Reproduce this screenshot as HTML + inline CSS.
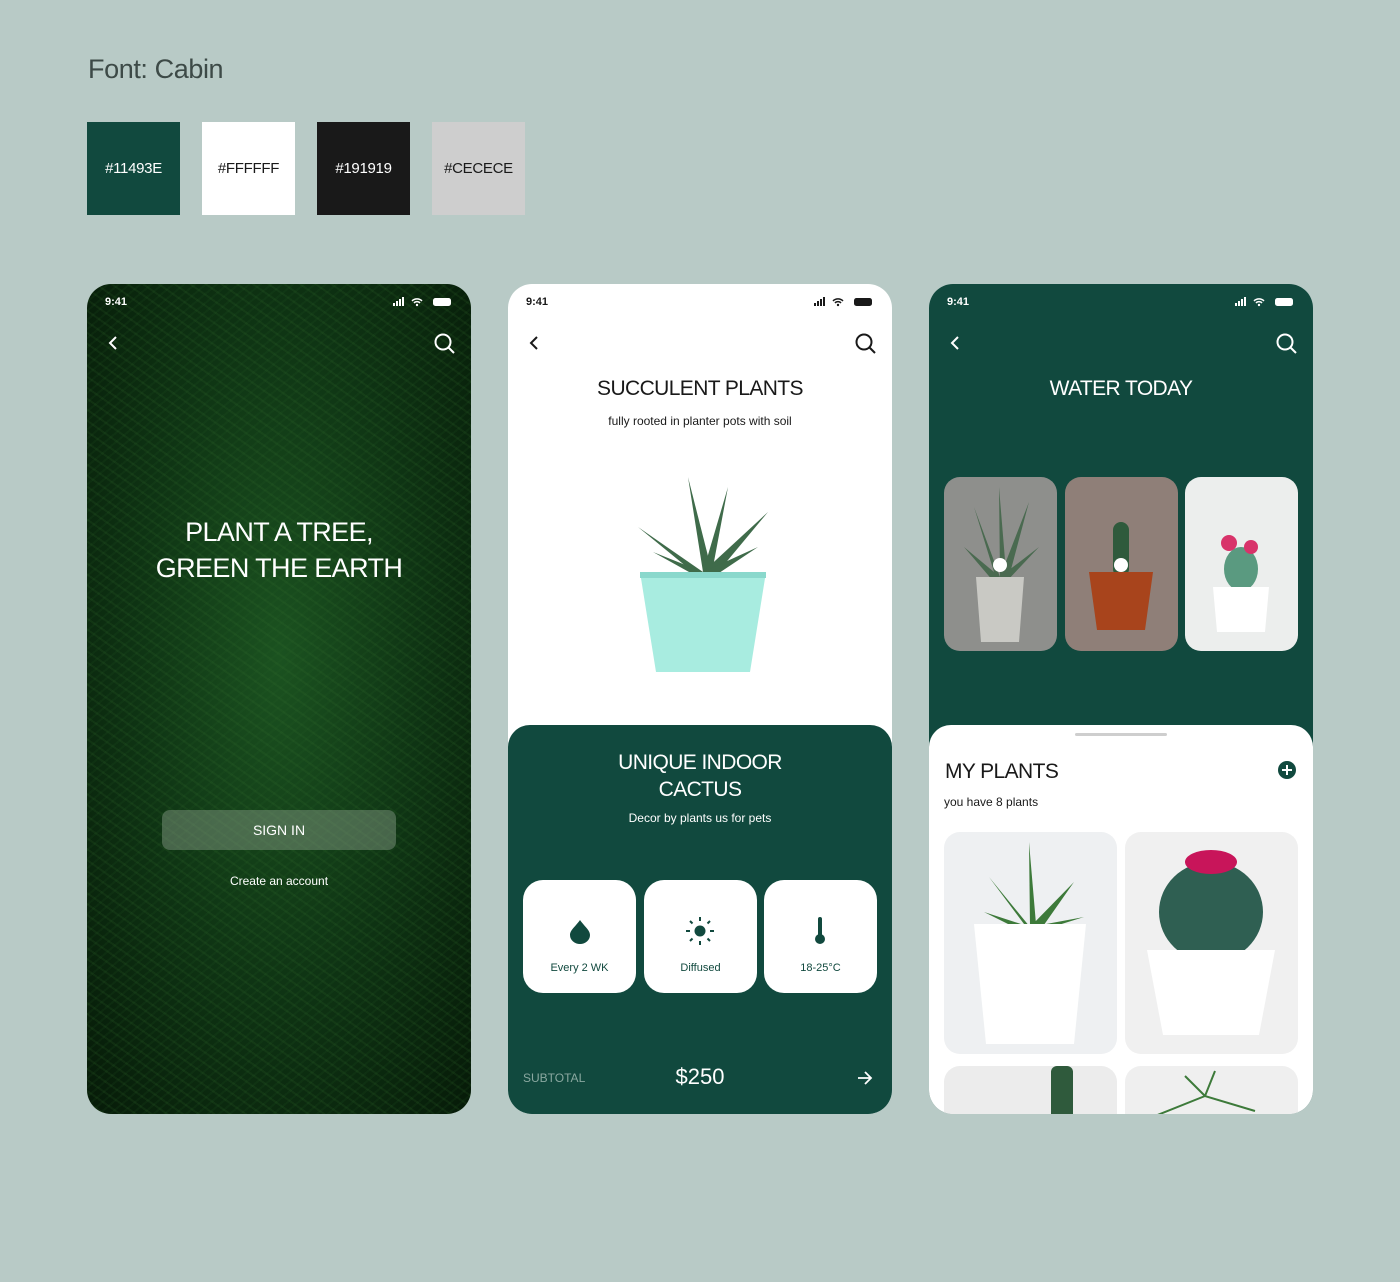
<!DOCTYPE html>
<html><head><style>
*{margin:0;padding:0;box-sizing:border-box}
body{width:1400px;height:1282px;background:#b8cac6;font-family:"Liberation Sans",sans-serif;position:relative;overflow:hidden}
.abs{position:absolute}
.sw{position:absolute;top:122px;width:93px;height:93px;display:flex;align-items:center;justify-content:center;font-size:15px;letter-spacing:-0.3px}
.ph{position:absolute;top:284px;width:384px;height:830px;border-radius:24px;overflow:hidden}
.sb{position:absolute;top:12px;left:18px;font-size:11px;font-weight:bold}
.c{text-align:center;position:absolute;left:0;width:100%}
.card{position:absolute;top:596px;width:113px;height:113px;background:#fff;border-radius:20px;color:#11493e;font-size:11px;text-align:center}
.tile{position:absolute;border-radius:16px;overflow:hidden}
.t{letter-spacing:-0.6px}
</style></head><body>
<div class="abs" style="left:88px;top:54px;font-size:27px;color:#3d4a47;letter-spacing:-0.4px">Font: Cabin</div>
<div class="sw" style="left:87px;background:#11493e;color:#fff">#11493E</div>
<div class="sw" style="left:202px;background:#fff;color:#191919">#FFFFFF</div>
<div class="sw" style="left:317px;background:#191919;color:#fff">#191919</div>
<div class="sw" style="left:432px;background:#cecece;color:#191919">#CECECE</div>

<!-- phone 1 -->
<div class="ph" style="left:87px;background:radial-gradient(ellipse at 50% 45%,#1b5220 0%,#0f3514 50%,#061a08 100%)">
<div style="position:absolute;inset:0;background:repeating-linear-gradient(35deg,rgba(60,120,50,.14) 0 2px,transparent 2px 9px),repeating-linear-gradient(-40deg,rgba(40,100,40,.12) 0 2px,transparent 2px 7px)"></div>
<div class="sb" style="color:#fff">9:41</div>
<svg class="abs" style="left:306px;top:12px" width="60" height="12"><rect x="0" y="7" width="2" height="3" fill="#fff"/><rect x="3" y="5" width="2" height="5" fill="#fff"/><rect x="6" y="3" width="2" height="7" fill="#fff"/><rect x="9" y="1" width="2" height="9" fill="#fff"/><path d="M19 5a7 7 0 0 1 10 0M21 7a4 4 0 0 1 6 0" stroke="#fff" stroke-width="1.5" fill="none"/><circle cx="24" cy="9" r="1.2" fill="#fff"/><rect x="40" y="2" width="18" height="8" rx="2.5" fill="#fff"/></svg>
<svg class="abs" style="left:20px;top:51px" width="14" height="16"><path d="M9 2 3 8l6 6" stroke="#fff" stroke-width="2" fill="none"/></svg>
<svg class="abs" style="left:347px;top:49px" width="22" height="22"><circle cx="9" cy="9" r="7.5" stroke="#fff" stroke-width="2" fill="none"/><path d="M14.5 14.5 20 20" stroke="#fff" stroke-width="2"/></svg>
<div class="c t" style="top:230px;color:#fff;font-size:27px;line-height:36px">PLANT A TREE,<br>GREEN THE EARTH</div>
<div class="abs" style="left:75px;top:526px;width:234px;height:40px;border-radius:8px;background:rgba(140,160,140,.45);color:#fff;font-size:14px;text-align:center;line-height:40px">SIGN IN</div>
<div class="c" style="top:590px;color:#fff;font-size:12px">Create an account</div>
</div>

<!-- phone 2 -->
<div class="ph" style="left:508px;background:#fff">
<div class="sb" style="color:#191919">9:41</div>
<svg class="abs" style="left:306px;top:12px" width="60" height="12"><rect x="0" y="7" width="2" height="3" fill="#191919"/><rect x="3" y="5" width="2" height="5" fill="#191919"/><rect x="6" y="3" width="2" height="7" fill="#191919"/><rect x="9" y="1" width="2" height="9" fill="#191919"/><path d="M19 5a7 7 0 0 1 10 0M21 7a4 4 0 0 1 6 0" stroke="#191919" stroke-width="1.5" fill="none"/><circle cx="24" cy="9" r="1.2" fill="#191919"/><rect x="40" y="2" width="18" height="8" rx="2.5" fill="#191919"/></svg>
<svg class="abs" style="left:20px;top:51px" width="14" height="16"><path d="M9 2 3 8l6 6" stroke="#191919" stroke-width="2" fill="none"/></svg>
<svg class="abs" style="left:347px;top:49px" width="22" height="22"><circle cx="9" cy="9" r="7.5" stroke="#191919" stroke-width="2" fill="none"/><path d="M14.5 14.5 20 20" stroke="#191919" stroke-width="2"/></svg>
<div class="c t" style="top:93px;font-size:21px;color:#191919">SUCCULENT PLANTS</div>
<div class="c" style="top:130px;font-size:12px;color:#191919">fully rooted in planter pots with soil</div>
<svg class="abs" style="left:120px;top:188px" width="150" height="210"><g fill="#3f6b4a"><path d="M75 100 40 30 70 90z"/><path d="M75 100 60 5 82 92z"/><path d="M75 100 100 15 85 95z"/><path d="M75 100 140 40 90 100z"/><path d="M75 100 10 55 65 100z"/><path d="M75 100 25 80 70 105z"/><path d="M75 100 130 75 85 105z"/></g><path d="M12 100h126l-16 100H28z" fill="#a8ece0"/><path d="M12 100h126v6H12z" fill="#8ad8cc"/></svg>
<div class="abs" style="left:0;top:441px;width:384px;height:389px;background:#11493e;border-radius:22px 22px 0 0">
<div class="c t" style="top:24px;color:#fff;font-size:21px;line-height:27px">UNIQUE INDOOR<br>CACTUS</div>
<div class="c" style="top:86px;color:#fff;font-size:12px">Decor by plants us for pets</div>
<div class="c" style="left:15px;width:auto;top:346px;color:#8aa8a0;font-size:12px">SUBTOTAL</div>
<div class="c" style="top:339px;color:#fff;font-size:22px">$250</div>
<svg class="abs" style="left:348px;top:344px" width="18" height="18"><path d="M2 9h13M9 3l6 6-6 6" stroke="#fff" stroke-width="1.8" fill="none"/></svg>
</div>
<div class="card" style="left:15px"><svg class="abs" style="left:46px;top:38px" width="22" height="26"><path d="M11 2C7 8 1 12 1 17a10 9 0 0 0 20 0C21 12 15 8 11 2z" fill="#11493e"/></svg><div class="abs" style="top:82px;width:100%">Every 2 WK</div></div>
<div class="card" style="left:136px"><svg class="abs" style="left:40px;top:36px" width="32" height="30"><circle cx="16" cy="15" r="5.5" fill="#11493e"/><g stroke="#11493e" stroke-width="2"><path d="M16 1v4M16 25v4M2 15h4M26 15h4M6 5l2.5 2.5M26 5l-2.5 2.5M6 25l2.5-2.5M26 25l-2.5-2.5"/></g></svg><div class="abs" style="top:82px;width:100%">Diffused</div></div>
<div class="card" style="left:256px"><svg class="abs" style="left:48px;top:36px" width="16" height="30"><rect x="6" y="1" width="4" height="20" rx="2" fill="#11493e"/><circle cx="8" cy="23" r="5" fill="#11493e"/></svg><div class="abs" style="top:82px;width:100%">18-25°C</div></div>
</div>

<!-- phone 3 -->
<div class="ph" style="left:929px;background:#11493e">
<div class="sb" style="color:#fff">9:41</div>
<svg class="abs" style="left:306px;top:12px" width="60" height="12"><rect x="0" y="7" width="2" height="3" fill="#fff"/><rect x="3" y="5" width="2" height="5" fill="#fff"/><rect x="6" y="3" width="2" height="7" fill="#fff"/><rect x="9" y="1" width="2" height="9" fill="#fff"/><path d="M19 5a7 7 0 0 1 10 0M21 7a4 4 0 0 1 6 0" stroke="#fff" stroke-width="1.5" fill="none"/><circle cx="24" cy="9" r="1.2" fill="#fff"/><rect x="40" y="2" width="18" height="8" rx="2.5" fill="#fff"/></svg>
<svg class="abs" style="left:20px;top:51px" width="14" height="16"><path d="M9 2 3 8l6 6" stroke="#fff" stroke-width="2" fill="none"/></svg>
<svg class="abs" style="left:347px;top:49px" width="22" height="22"><circle cx="9" cy="9" r="7.5" stroke="#fff" stroke-width="2" fill="none"/><path d="M14.5 14.5 20 20" stroke="#fff" stroke-width="2"/></svg>
<div class="c t" style="top:93px;color:#fff;font-size:21px">WATER TODAY</div>
<div class="tile" style="left:15px;top:193px;width:113px;height:174px;background:#8e8f8c"><svg width="113" height="174"><g fill="#4a6a50"><path d="M56 100 30 30 50 95zM56 100 55 10 62 95zM56 100 85 25 65 100zM56 100 20 70 50 105zM56 100 95 70 62 105z"/></g><path d="M32 100h48l-5 65H37z" fill="#c9c9c4"/><circle cx="56" cy="88" r="7" fill="#fff"/></svg></div>
<div class="tile" style="left:136px;top:193px;width:113px;height:174px;background:#8f7f78"><svg width="113" height="174"><rect x="48" y="45" width="16" height="55" rx="8" fill="#2f5a3c"/><path d="M24 95h64l-8 58H32z" fill="#a8441c"/><circle cx="56" cy="88" r="7" fill="#fff"/></svg></div>
<div class="tile" style="left:256px;top:193px;width:113px;height:174px;background:#eceeed"><svg width="113" height="174"><ellipse cx="56" cy="92" rx="17" ry="22" fill="#5a9a80"/><circle cx="44" cy="66" r="8" fill="#d8336a"/><circle cx="66" cy="70" r="7" fill="#d8336a"/><path d="M28 110h56l-4 45H32z" fill="#fff"/></svg></div>
<div class="abs" style="left:0;top:441px;width:384px;height:389px;background:#fff;border-radius:22px 22px 0 0">
<div class="abs" style="left:146px;top:8px;width:92px;height:3px;background:#cecece;border-radius:2px"></div>
<div class="abs t" style="left:16px;top:35px;font-size:21px;color:#191919">MY PLANTS</div>
<div class="abs" style="left:15px;top:70px;font-size:12px;color:#191919">you have 8 plants</div>
<svg class="abs" style="left:348px;top:35px" width="20" height="20"><circle cx="10" cy="10" r="9" fill="#11493e"/><path d="M10 5v10M5 10h10" stroke="#fff" stroke-width="2"/></svg>
<div class="tile" style="left:15px;top:107px;width:173px;height:222px;background:#eef0f2"><svg width="173" height="222"><g fill="#3d7a3a"><path d="M86 95 45 45 80 92zM86 95 85 10 92 92zM86 95 130 50 95 100zM86 95 40 80 80 100zM86 95 140 85 92 100z"/></g><path d="M30 92h112l-12 120H42z" fill="#fff"/></svg></div>
<div class="tile" style="left:196px;top:107px;width:173px;height:222px;background:#f0f0f0"><svg width="173" height="222"><ellipse cx="86" cy="80" rx="52" ry="50" fill="#2f5f52"/><ellipse cx="86" cy="30" rx="26" ry="12" fill="#c8155a"/><path d="M22 118h128l-16 85H38z" fill="#fff"/></svg></div>
<div class="tile" style="left:15px;top:341px;width:173px;height:80px;background:#ececec"><div class="abs" style="left:107px;top:0;width:22px;height:60px;background:#2f5a3c;border-radius:6px"></div></div>
<div class="tile" style="left:196px;top:341px;width:173px;height:80px;background:#efefef"><svg width="173" height="60"><path d="M30 50 80 30 130 45M80 30 90 5M80 30 60 10" stroke="#3d7a3a" stroke-width="2" fill="none"/></svg></div>
</div>
</div>
</body></html>
